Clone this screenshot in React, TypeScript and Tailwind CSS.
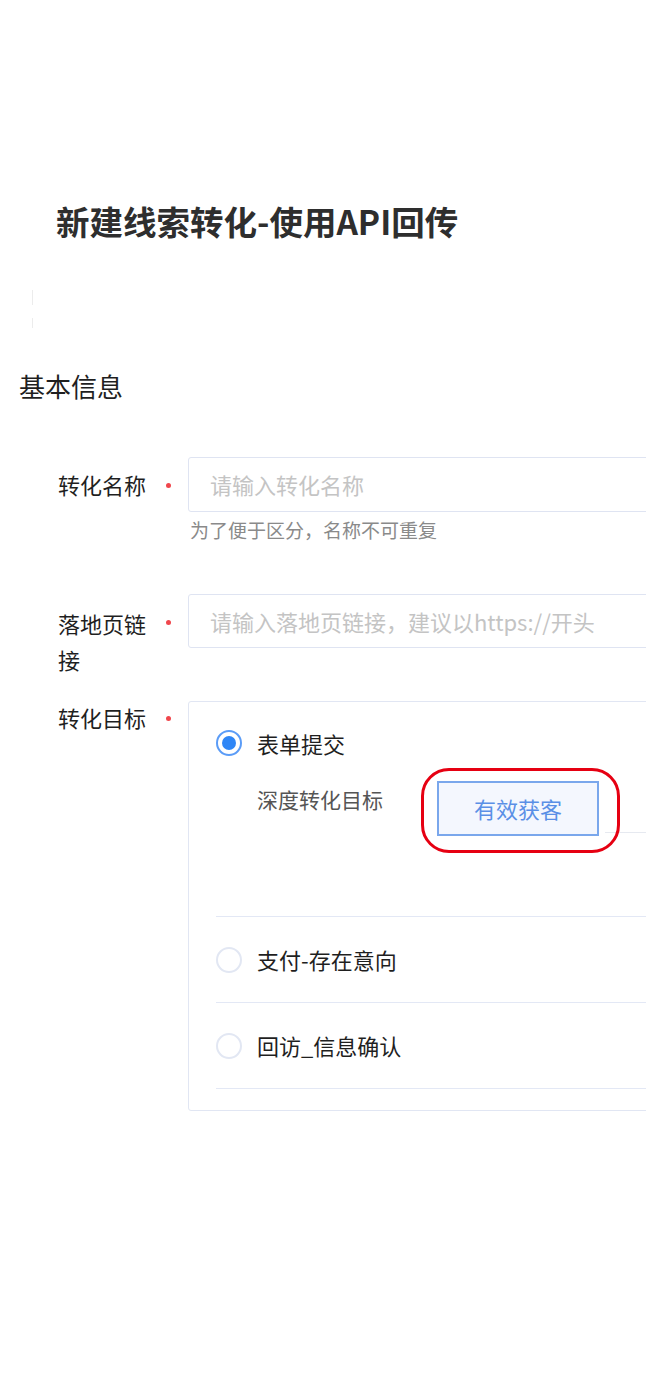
const font = "font-['Noto_Sans_CJK_SC','Noto_Sans',sans-serif]";

function RequiredDot({ top }: { top: string }) {
  return (
    <div className="w-[38px] shrink-0 flex">
      <span className={`ml-[16px] ${top} w-[5px] h-[5px] rounded-full bg-[#f0464c]`} />
    </div>
  );
}

function Radio({ checked }: { checked?: boolean }) {
  if (checked) {
    return (
      <span className="w-[26px] h-[26px] rounded-full border-2 border-[#5b9cf7] flex items-center justify-center shrink-0">
        <span className="w-[14px] h-[14px] rounded-full bg-[#2f86f6]" />
      </span>
    );
  }
  return <span className="w-[26px] h-[26px] rounded-full border-2 border-[#e2e7f3] shrink-0" />;
}

export default function App() {
  return (
    <div className={`w-[646px] h-[1390px] overflow-hidden bg-white ${font}`}>
      {/* Title */}
      <h1 className="pt-[199px] pl-[56px] text-[33.5px] leading-[44px] font-bold text-[#2e2e2e] whitespace-nowrap">
        新建线索转化-使用API回传
      </h1>

      {/* faint marker */}
      <div className="mt-[47px] ml-[32px] flex flex-col gap-[13px]">
        <span className="w-px h-[15px] bg-[#ececec]" />
        <span className="w-px h-[10px] bg-[#ececec]" />
      </div>

      <h2 className="mt-[40px] pl-[19px] text-[26px] leading-[36px] text-[#1f1f1f]">基本信息</h2>

      {/* 转化名称 */}
      <div className="mt-[53px] flex pl-[58px]">
        <div className="w-[92px] shrink-0 pt-[11px] text-[22px] leading-[32px] text-[#1f1f1f]">转化名称</div>
        <RequiredDot top="mt-[26px]" />
        <div className="w-[520px] shrink-0">
          <div className="h-[55px] border border-[#dfe4f2] rounded-[3px] flex items-center pl-[21px] text-[22px] text-[#c4c4c4] whitespace-nowrap">
            请输入转化名称
          </div>
          <p className="mt-[5px] pl-[2px] text-[19px] leading-[26px] text-[#8a8a8a]">为了便于区分，名称不可重复</p>
        </div>
      </div>

      {/* 落地页链接 */}
      <div className="mt-[51px] flex pl-[58px]">
        <div className="w-[92px] shrink-0 pt-[11px] text-[22px] leading-[36px] text-[#1f1f1f]">落地页链接</div>
        <RequiredDot top="mt-[26px]" />
        <div className="w-[520px] shrink-0">
          <div className="h-[54px] border border-[#dfe4f2] rounded-[3px] flex items-center pl-[21px] text-[22px] text-[#c4c4c4] whitespace-nowrap">
            请输入落地页链接，建议以https://开头
          </div>
        </div>
      </div>

      {/* 转化目标 */}
      <div className="mt-[24px] flex pl-[58px]">
        <div className="w-[92px] shrink-0 text-[22px] leading-[32px] text-[#1f1f1f]">转化目标</div>
        <RequiredDot top="mt-[15px]" />
        <div className="w-[520px] shrink-0 border border-[#e1e6f3] rounded-[3px] pl-[27px] pb-[21px]">
          {/* 表单提交 */}
          <div className="h-[215px] border-b border-[#e3e8f5] pt-[28px]">
            <div className="flex items-center gap-[15px] h-[26px]">
              <Radio checked />
              <span className="text-[22px] text-[#1f1f1f]">表单提交</span>
            </div>
            <div className="mt-[25px] pl-[41px] flex items-center">
              <span className="text-[21px] text-[#555] w-[180px] shrink-0 -mt-[18px]">深度转化目标</span>
              <div className="relative shrink-0">
                <div className="w-[162px] h-[55px] border-2 border-[#7aa7ec] bg-[#f4f7fe] flex items-center justify-center text-[22px] text-[#5a8fe6]">
                  有效获客
                </div>
                <div className="absolute -left-[16px] -top-[13px] w-[199px] h-[85px] border-[3px] border-[#e60012] rounded-[28px]" />
              </div>
              <div className="ml-[6px] flex-1 self-end mb-[3px] h-px bg-[#e6e9f0]" />
            </div>
          </div>
          {["支付-存在意向", "回访_信息确认"].map((label) => (
            <div key={label} className="h-[86px] border-b border-[#e3e8f5] flex items-center gap-[15px]">
              <Radio />
              <span className="text-[22px] text-[#1f1f1f]">{label}</span>
            </div>
          ))}
        </div>
      </div>
    </div>
  );
}
